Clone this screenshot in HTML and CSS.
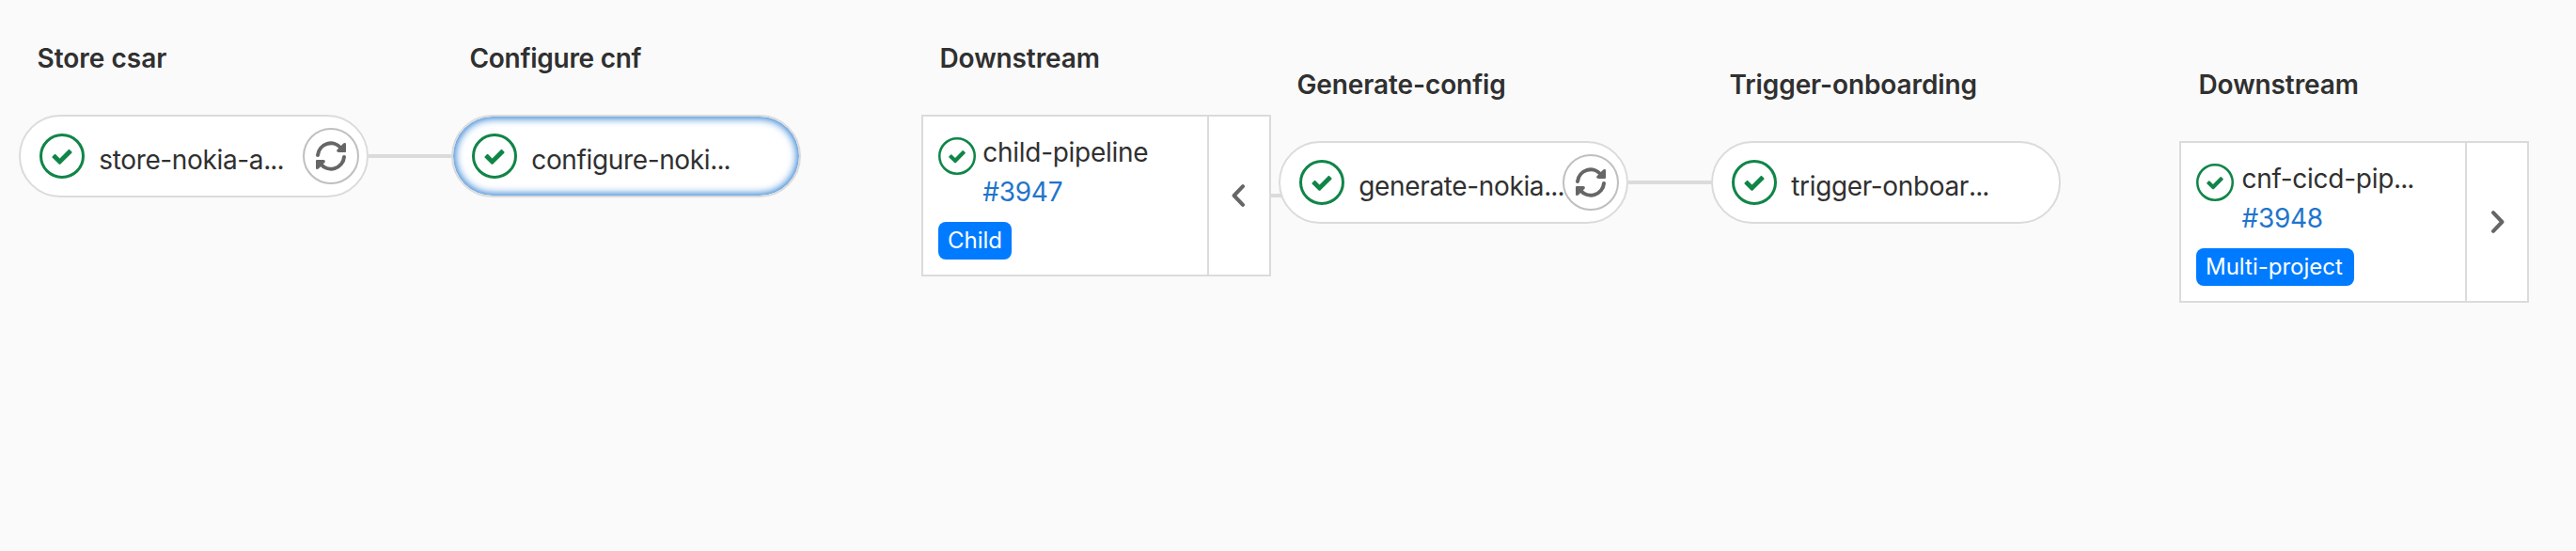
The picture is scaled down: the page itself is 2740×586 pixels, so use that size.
FILE: index.html
```html
<!DOCTYPE html>
<html lang="en">
<head>
<meta charset="utf-8">
<title>Pipeline graph</title>
<link rel="stylesheet" href="styles.css">
</head>
<body>
<svg class="sprite" aria-hidden="true">
  <symbol id="check" viewBox="0 0 14 14"><circle class="ring" cx="7" cy="7" r="6.56"/><path d="M6.278 7.697L5.045 6.464a.296.296 0 0 0-.42-.002l-.613.614a.298.298 0 0 0 .002.42l1.91 1.909a.5.5 0 0 0 .703.005l.265-.265L9.997 6.04a.291.291 0 0 0-.009-.408l-.614-.614a.29.29 0 0 0-.408-.009L6.278 7.697z"/></symbol>
  <symbol id="retry" viewBox="0 0 32 32">
    <g id="half"><path class="arc" d="M2 15A14 14 0 0 1 27 7.8"/><path d="M29 2.7Q30 1.9 31.2 2.1Q32 2.3 32 3.2V11Q32 12 31 12H24.4Q22.4 12 22.1 10.6Q22 9.7 22.8 8.9Z"/></g>
    <use href="#half" transform="rotate(180 16 16)"/>
  </symbol>
</svg>
<main class="graph">
  <section class="stage">
    <h2 class="stage-title">Store csar</h2>
    <div class="job">
      <svg class="status"><use href="#check"/></svg>
      <span class="job-name">store-nokia-a<span class="dots">...</span></span>
      <button class="retry" aria-label="Retry"><svg><use href="#retry"/></svg></button>
    </div>
  </section>
  <div class="link link-stage"></div>
  <section class="stage">
    <h2 class="stage-title tight">Configure cnf</h2>
    <div class="job job-active">
      <svg class="status"><use href="#check"/></svg>
      <span class="job-name">configure-noki<span class="dots">...</span></span>
    </div>
  </section>
  <section class="stage downstream">
    <h2 class="stage-title snug">Downstream</h2>
    <div class="card">
      <div class="card-body">
        <div class="card-head">
          <svg class="status status-sm"><use href="#check"/></svg>
          <div class="card-text"><div class="card-name">child-pipeline</div><a class="card-id">#3947</a></div>
        </div>
        <span class="badge">Child</span>
      </div>
      <button class="expand" aria-label="Collapse"><svg viewBox="0 0 16 24"><path d="M12 2.2L2.6 12L12 21.8"/></svg></button>
    </div>
  </section>
  <div class="link link-child"></div>
  <div class="child">
    <section class="stage">
      <h2 class="stage-title snug">Generate-config</h2>
      <div class="job">
        <svg class="status"><use href="#check"/></svg>
        <span class="job-name">generate-nokia<span class="dots">...</span></span>
        <button class="retry" aria-label="Retry"><svg><use href="#retry"/></svg></button>
      </div>
    </section>
    <div class="link link-stage"></div>
    <section class="stage">
      <h2 class="stage-title snug">Trigger-onboarding</h2>
      <div class="job">
        <svg class="status"><use href="#check"/></svg>
        <span class="job-name">trigger-onboar<span class="dots">...</span></span>
      </div>
    </section>
    <section class="stage downstream multi">
      <h2 class="stage-title snug">Downstream</h2>
      <div class="card">
        <div class="card-body">
          <div class="card-head">
            <svg class="status status-sm"><use href="#check"/></svg>
            <div class="card-text"><div class="card-name">cnf-cicd-pip<span class="dots">...</span></div><a class="card-id">#3948</a></div>
          </div>
          <span class="badge">Multi-project</span>
        </div>
        <button class="expand" aria-label="Expand"><svg viewBox="-2 0 16 24"><path d="M2 2.2L11.4 12L2 21.8"/></svg></button>
      </div>
    </section>
  </div>
</main>
</body>
</html>
```
FILE: styles.css
```css
* { box-sizing: border-box; }
body {
  margin: 0;
  background: #fafafa;
  color: #303030;
  font: 400 28px/40px Inter, "Liberation Sans", sans-serif;
}
.sprite { position: absolute; width: 0; height: 0; }
.graph {
  display: flex;
  align-items: flex-start;
  height: 586px;
  padding-left: 20px;
  overflow: hidden;
}
.stage { flex: none; width: 372px; padding-top: 42px; }
.stage-title {
  margin: 0 0 40px;
  padding-left: 19.5px;
  font-size: 28px;
  font-weight: 600;
  line-height: 40px;
  white-space: nowrap;
}
.tight { letter-spacing: -0.28px; }
.snug { letter-spacing: -0.1px; }
.downstream { margin-left: 128px; }
.multi { margin-left: 126px; }
.multi .stage-title { padding-left: 20.5px; }
.child {
  display: flex;
  align-items: flex-start;
  position: relative;
  margin-top: 28px;
}
.link { flex: none; height: 4px; background: #dbdbdb; }
.link-stage { width: 88px; margin-top: 164px; }
.link-child { width: 16px; margin: 206px -8px 0 0; }
.job {
  display: flex;
  align-items: center;
  position: relative;
  height: 88px;
  padding-left: 20px;
  border: 2px solid #dbdbdb;
  border-radius: 44px;
  background: #fff;
}
.job-active { box-shadow: inset 0 0 8px 2px #2b7fd3; }
.status {
  flex: none;
  display: block;
  width: 48px;
  height: 48px;
  fill: #108548;
}
.status-sm { width: 40px; height: 40px; }
.ring { fill: none; stroke: #108548; stroke-width: 0.88; }
.job-name { margin: 8px 0 0 15.3px; letter-spacing: -0.36px; white-space: nowrap; }
.dots { letter-spacing: -0.9px; }
.retry {
  display: grid;
  place-items: center;
  position: absolute;
  top: 12px;
  right: 8px;
  width: 60px;
  height: 60px;
  padding: 0;
  border: 2px solid #bfbfbf;
  border-radius: 50%;
  background: #fff;
}
.retry svg { width: 32px; height: 32px; fill: #666; }
.arc { fill: none; stroke: #666; stroke-width: 4; stroke-linecap: round; }
.card {
  display: flex;
  height: 172px;
  border: 2px solid #dbdbdb;
  background: #fff;
}
.card-body { flex: 1; padding: 16px; }
.card-head { display: flex; gap: 7.3px; }
.multi .card-head { gap: 8.5px; }
.card-head .status { margin-top: 6px; }
.card-text { margin-top: 1px; line-height: 42px; height: 96px; margin-bottom: -1px; }
.card-name { letter-spacing: -0.28px; white-space: nowrap; }
.card-id { display: block; color: #1f75cb; letter-spacing: -0.28px; }
.badge {
  display: block;
  width: fit-content;
  height: 40px;
  padding: 0 10px;
  border-radius: 8px;
  background: #007bff;
  color: #fff;
  font-size: 24px;
}
.multi .badge { padding-right: 12px; }
.expand {
  display: grid;
  place-items: center;
  width: 66px;
  padding: 0;
  border: 0;
  border-left: 2px solid #dbdbdb;
  background: transparent;
}
.expand svg {
  width: 16px;
  height: 24px;
  fill: none;
  stroke: #666;
  stroke-width: 4;
  stroke-linecap: round;
  stroke-linejoin: round;
}
```
